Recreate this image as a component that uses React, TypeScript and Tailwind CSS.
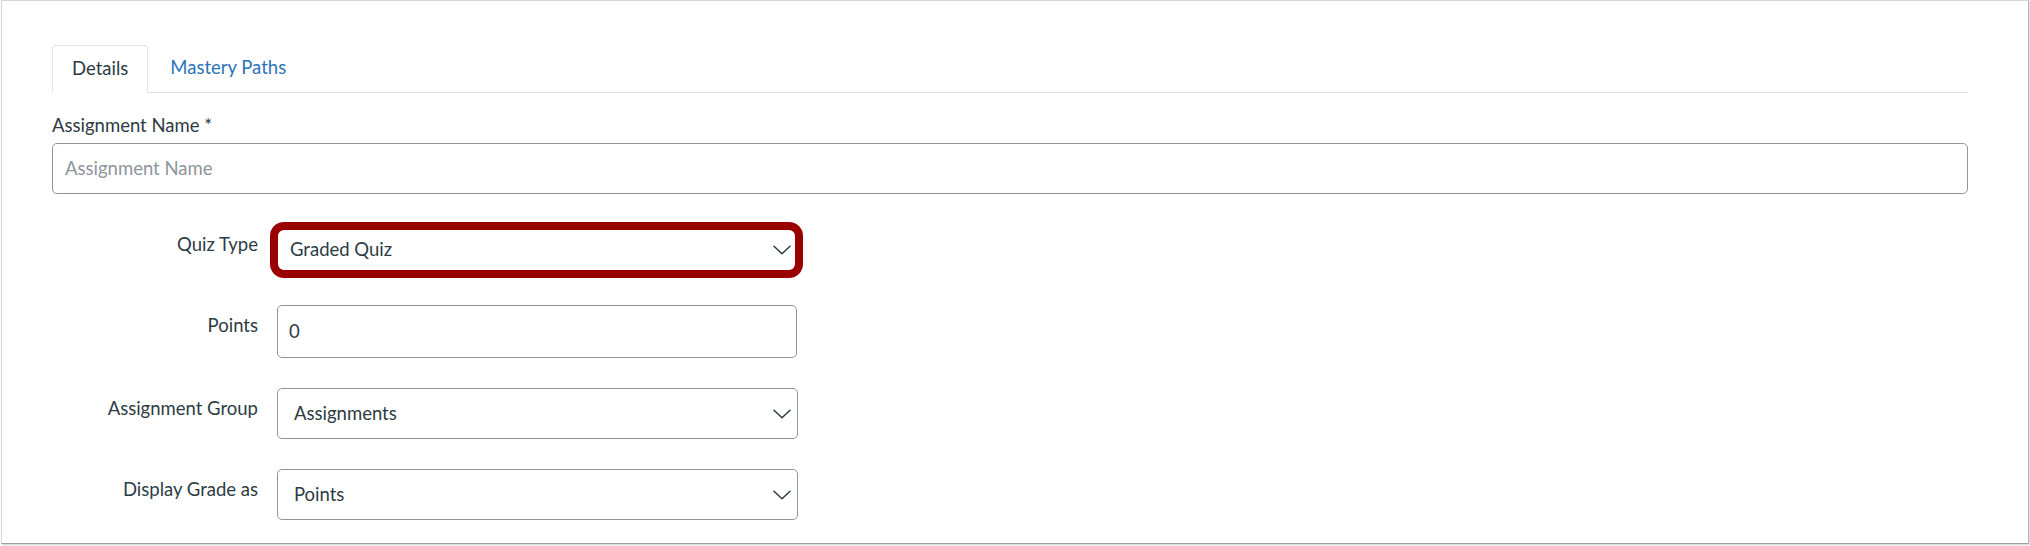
const font = { fontFamily: "Lato, 'Open Sans', sans-serif" };

function Chevron() {
  return (
    <svg
      width="18"
      height="10"
      viewBox="0 0 18 10"
      fill="none"
      stroke="#2d3b45"
      strokeWidth="1.5"
      strokeLinecap="round"
      strokeLinejoin="round"
      aria-hidden="true"
    >
      <path d="M1 1.2 L9 8.8 L17 1.2" />
    </svg>
  );
}

function SelectBox({ value, className = "" }: { value: string; className?: string }) {
  return (
    <div
      className={`flex h-[51px] w-[521px] items-center justify-between rounded-[5px] border border-[#8d959f] bg-white pl-[16px] pr-[6px] text-[18.5px] text-[#2d3b45] ${className}`}
    >
      <span>{value}</span>
      <Chevron />
    </div>
  );
}

function FieldRow({ label, children }: { label: string; children: React.ReactNode }) {
  return (
    <div className="flex items-start">
      <div className="w-[206px] pt-[9px] text-right text-[18.5px] leading-[23px] text-[#2d3b45]">
        {label}
      </div>
      <div className="ml-[19px]">{children}</div>
    </div>
  );
}

export default function App() {
  return (
    <div className="h-[546px] w-[2030px] bg-white" style={font}>
      <div className="ml-[1px] h-[544px] w-[2028px] border border-[#d6d6d6] border-b-[#9e9e9e] border-r-[#b8b8b8] bg-white pl-[50px] pt-[44px] shadow-[1px_1px_2px_rgba(0,0,0,0.2)]">
        <div className="w-[1916px]">
          {/* Tabs */}
          <div className="flex h-[48px] items-end border-b border-[#e2e4e6]">
            <div className="-mb-px h-[48px] rounded-t-[4px] border border-b-white border-[#e2e4e6] bg-white px-[19px] pt-[11px] text-[18.5px] leading-[23px] text-[#2d3b45]">
              Details
            </div>
            <div className="ml-[2px] h-[48px] px-[20px] pt-[12px] text-[18.5px] leading-[23px] text-[#2b73b9]">
              Mastery Paths
            </div>
          </div>

          {/* Assignment name */}
          <div className="mt-[21px] text-[18.5px] leading-[23px] text-[#2d3b45]">Assignment Name *</div>
          <div className="mt-[6px] flex h-[51px] items-center rounded-[5px] border border-[#8d959f] px-[12px] text-[18.5px] text-[#8e959c]">
            Assignment Name
          </div>

          {/* Fields */}
          <div className="mt-[30px] flex flex-col gap-[30px]">
            <FieldRow label="Quiz Type">
              <div className="relative -ml-[4px]">
                <SelectBox value="Graded Quiz" className="w-[525px]" />
                <div className="pointer-events-none absolute -left-[3px] -right-[5px] -top-[2px] -bottom-[3px] rounded-[14px] border-[8px] border-[#9a0000]" />
              </div>
            </FieldRow>
            <FieldRow label="Points">
              <div className="flex h-[53px] w-[520px] items-center rounded-[5px] border border-[#8d959f] px-[11px] text-[18.5px] text-[#2d3b45]">
                0
              </div>
            </FieldRow>
            <FieldRow label="Assignment Group">
              <SelectBox value="Assignments" />
            </FieldRow>
            <FieldRow label="Display Grade as">
              <SelectBox value="Points" />
            </FieldRow>
          </div>
        </div>
      </div>
    </div>
  );
}
